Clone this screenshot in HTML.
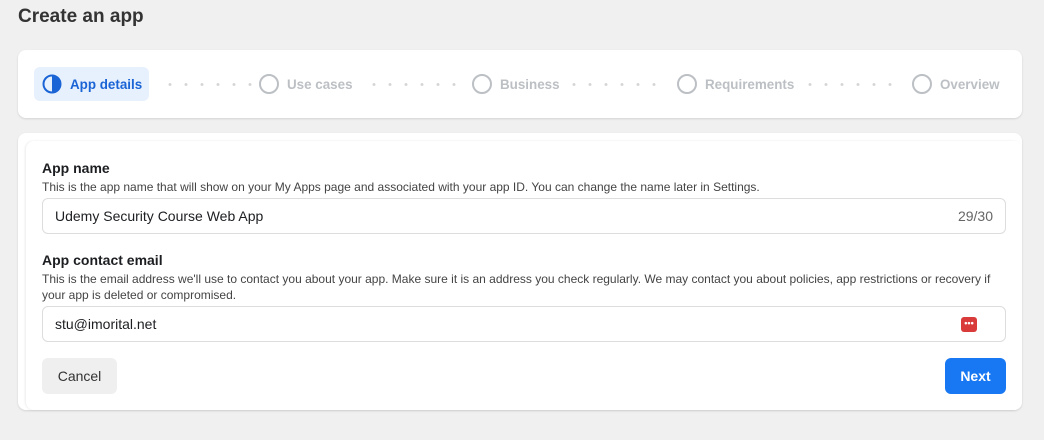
<!DOCTYPE html>
<html><head><style>
*{box-sizing:border-box;margin:0;padding:0}
body{width:1044px;height:440px;background:#f0f0f0;font-family:"Liberation Sans",Arial,sans-serif;position:relative;overflow:hidden;color:#1c1e21}
h1{position:absolute;left:18px;top:6px;font-size:19px;font-weight:bold;color:#333}
.card{position:absolute;background:#fff;border-radius:8px;box-shadow:0 1px 2px rgba(0,0,0,.12)}
.step{position:absolute;top:84px;transform:translateY(-50%);display:flex;align-items:center;font-size:13.4px;font-weight:bold;color:#bcc0c4}
.circ{width:20px;height:20px;border:2px solid #bcc0c4;border-radius:50%;margin-right:8px}
.dots{position:absolute;top:83px;height:3px;background-image:radial-gradient(circle,#d6d6d6 1.3px,transparent 1.6px);background-size:16px 3px}
.lbl{position:absolute;left:42px;font-size:14px;font-weight:bold;color:#1c1e21}
.desc{position:absolute;left:42px;font-size:12px;color:#444;line-height:16px;width:960px}
.inp{position:absolute;left:42px;width:964px;height:36px;border:1px solid #ddd;border-radius:6px;font-size:14px;padding:0 12px;display:flex;align-items:center;color:#1c1e21}
.btn{position:absolute;top:358px;height:36px;border-radius:6px;font-size:14px;display:flex;align-items:center;justify-content:center}
</style></head><body>
<h1>Create an app</h1>
<div class="card" style="left:18px;top:50px;width:1004px;height:68px"></div>
<div style="position:absolute;left:34px;top:67px;width:115px;height:34px;background:#e7f0fd;border-radius:6px"></div>
<div class="step" style="left:42px;color:#1a64d6"><svg width="20" height="20" viewBox="0 0 20 20" style="margin-right:8px"><circle cx="10" cy="10" r="8.5" fill="none" stroke="#1a64d6" stroke-width="2"/><path d="M10 1.5A8.5 8.5 0 0 1 10 18.5Z" fill="#1a64d6"/></svg>App details</div>
<div class="dots" style="left:162px;width:96px"></div>
<div class="step" style="left:259px"><div class="circ"></div>Use cases</div>
<div class="dots" style="left:366px;width:96px"></div>
<div class="step" style="left:472px"><div class="circ"></div>Business</div>
<div class="dots" style="left:566px;width:96px"></div>
<div class="step" style="left:677px"><div class="circ"></div>Requirements</div>
<div class="dots" style="left:802px;width:96px"></div>
<div class="step" style="left:912px"><div class="circ"></div>Overview</div>

<div class="card" style="left:18px;top:133px;width:1004px;height:277px"></div>
<div class="card" style="left:26px;top:141px;width:996px;height:269px;box-shadow:-1px 0 2px rgba(0,0,0,.08)"></div>
<div class="lbl" style="top:160px">App name</div>
<div class="desc" style="top:179px">This is the app name that will show on your My Apps page and associated with your app ID. You can change the name later in Settings.</div>
<div class="inp" style="top:198px">Udemy Security Course Web App<span style="margin-left:auto;color:#666">29/30</span></div>
<div class="lbl" style="top:252px">App contact email</div>
<div class="desc" style="top:271px">This is the email address we'll use to contact you about your app. Make sure it is an address you check regularly. We may contact you about policies, app restrictions or recovery if your app is deleted or compromised.</div>
<div class="inp" style="top:306px">stu@imorital.net<span style="margin-left:auto;margin-right:16px;width:16px;height:15px;background:#d93a3a;border-radius:3px;color:#fff;font-size:9px;line-height:13px;text-align:center;font-weight:bold">•••</span></div>
<div class="btn" style="left:42px;width:75px;background:#efefef;color:#333">Cancel</div>
<div class="btn" style="left:945px;width:61px;background:#1877f2;color:#fff;font-weight:bold">Next</div>
</body></html>
